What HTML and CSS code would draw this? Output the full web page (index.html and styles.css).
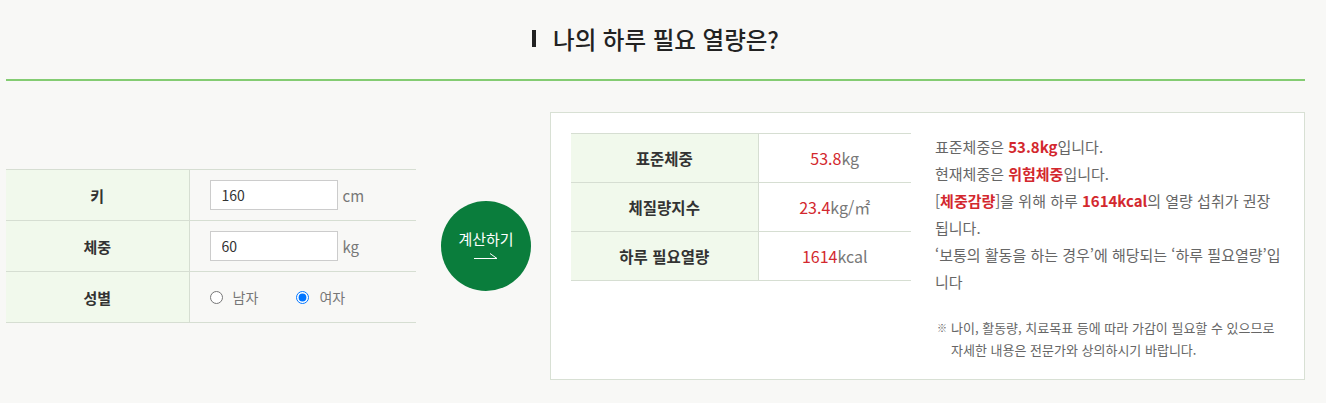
FILE: index.html
```html
<!DOCTYPE html>
<html lang="ko">

<head>
	<meta charset="utf-8">
	<title>나의 하루 필요 열량은?</title>
	<meta name="viewport" content="width=device-width, initial-scale=1">
	<link rel="stylesheet" href="styles.css">
</head>

<body>
	<div class="wrap">
		<header class="title-bar">
			<h2 class="title"><span class="title-mark"></span>나의 하루 필요 열량은?</h2>
		</header>

		<section class="calc">
			<table class="input-table">
				<tr>
					<th>키</th>
					<td><input type="text" class="field" value="160"><span class="unit">cm</span></td>
				</tr>
				<tr>
					<th>체중</th>
					<td><input type="text" class="field" value="60"><span class="unit">kg</span></td>
				</tr>
				<tr>
					<th>성별</th>
					<td>
						<label class="radio"><input type="radio" name="sex"> 남자</label>
						<label class="radio"><input type="radio" name="sex" checked> 여자</label>
					</td>
				</tr>
			</table>

			<button class="calc-btn" type="button">
				<span>계산하기</span>
				<svg width="26" height="10" viewBox="0 0 26 10"><path d="M1 8.5H24L17 3.5" fill="none" stroke="#fff" stroke-width="1"/></svg>
			</button>

			<div class="result">
				<table class="result-table">
					<tr>
						<th>표준체중</th>
						<td><em>53.8</em>kg</td>
					</tr>
					<tr>
						<th>체질량지수</th>
						<td><em>23.4</em>kg/㎡</td>
					</tr>
					<tr>
						<th>하루 필요열량</th>
						<td><em>1614</em>kcal</td>
					</tr>
				</table>
				<div class="result-text">
					<p>표준체중은 <strong>53.8kg</strong>입니다.</p>
					<p>현재체중은 <strong>위험체중</strong>입니다.</p>
					<p>[<strong>체중감량</strong>]을 위해 하루 <strong>1614kcal</strong>의 열량 섭취가 권장 됩니다.</p>
					<p>‘보통의 활동을 하는 경우’에 해당되는 ‘하루 필요열량’입니다</p>
					<p class="note">나이, 활동량, 치료목표 등에 따라 가감이 필요할 수 있으므로 자세한 내용은 전문가와 상의하시기 바랍니다.</p>
				</div>
			</div>
		</section>
	</div>
</body>

</html>
```

FILE: styles.css
```css
* {
	box-sizing: border-box;
}

body {
	margin: 0;
	background: #f8f8f6;
	color: #333;
	font-family: "Noto Sans CJK KR", "Noto Sans", sans-serif;
}

.wrap {
	width: 1299px;
	margin-left: 6px;
}

.title-bar {
	height: 81px;
	border-bottom: 2px solid #84cc72;
	display: flex;
	justify-content: center;
	align-items: center;
	padding-bottom: 2px;
}

.title {
	margin: 0;
	display: flex;
	align-items: center;
	font-size: 23.5px;
	font-weight: 500;
	color: #222;
}

.title-mark {
	display: inline-block;
	width: 4px;
	height: 17px;
	background: #222;
	margin-right: 17px;
}

.calc {
	display: flex;
	align-items: center;
	margin-top: 31px;
}

table {
	border-collapse: collapse;
}

.input-table {
	width: 410px;
	border-top: 1px solid #d6ded2;
}

.input-table th,
.input-table td {
	height: 51px;
	border-bottom: 1px solid #d6ded2;
	font-size: 15px;
}

.input-table th {
	width: 183px;
	background: #f1f9ec;
	border-right: 1px solid #d6ded2;
	font-weight: 700;
	color: #333;
}

.input-table td {
	padding-left: 20px;
	color: #777;
}

.field {
	width: 128px;
	height: 30px;
	border: 1px solid #ccc;
	background: #fff;
	padding: 0 11px;
	font-family: inherit;
	font-size: 14px;
	color: #333;
	vertical-align: middle;
}

.unit {
	margin-left: 5px;
	vertical-align: middle;
}

.radio {
	display: inline-flex;
	align-items: center;
	margin-right: 34px;
	font-size: 14px;
	color: #777;
}

.radio input {
	margin: 0 10px 0 0;
	width: 13px;
	height: 13px;
}

.calc-btn {
	flex: none;
	width: 90px;
	height: 90px;
	margin: 0 19px 0 25px;
	border: 0;
	border-radius: 50%;
	background: #0a7d3c;
	color: #fff;
	font-family: inherit;
	font-size: 15px;
	display: flex;
	flex-direction: column;
	align-items: center;
	justify-content: center;
	gap: 1px;
	padding: 0 0 4px;
	cursor: pointer;
}

.result {
	flex: 1;
	display: flex;
	background: #fff;
	border: 1px solid #d8e0d4;
	padding: 20px 21px 18px 20px;
}

.result-table {
	width: 340px;
	align-self: flex-start;
	border-top: 1px solid #d6ded2;
}

.result-table th,
.result-table td {
	height: 49px;
	border-bottom: 1px solid #d6ded2;
	font-size: 15.5px;
}

.result-table th {
	width: 187px;
	background: #f1f9ec;
	border-right: 1px solid #d6ded2;
	font-weight: 700;
	color: #333;
}

.result-table td {
	text-align: center;
	color: #777;
	font-size: 16px;
}

.result-table em {
	font-style: normal;
	color: #d3282e;
}

.result-text {
	flex: 1;
	margin-left: 24px;
	font-size: 15px;
	line-height: 27px;
	color: #666;
}

.result-text p {
	margin: 0;
}

.result-text strong {
	color: #d3282e;
	font-weight: 700;
}

.result-text .note {
	position: relative;
	margin-top: 22px;
	padding-left: 16px;
	font-size: 13px;
	line-height: 22px;
}

.note::before {
	content: "※";
	position: absolute;
	left: 2px;
	top: 0;
	font-size: 10px;
}
```
